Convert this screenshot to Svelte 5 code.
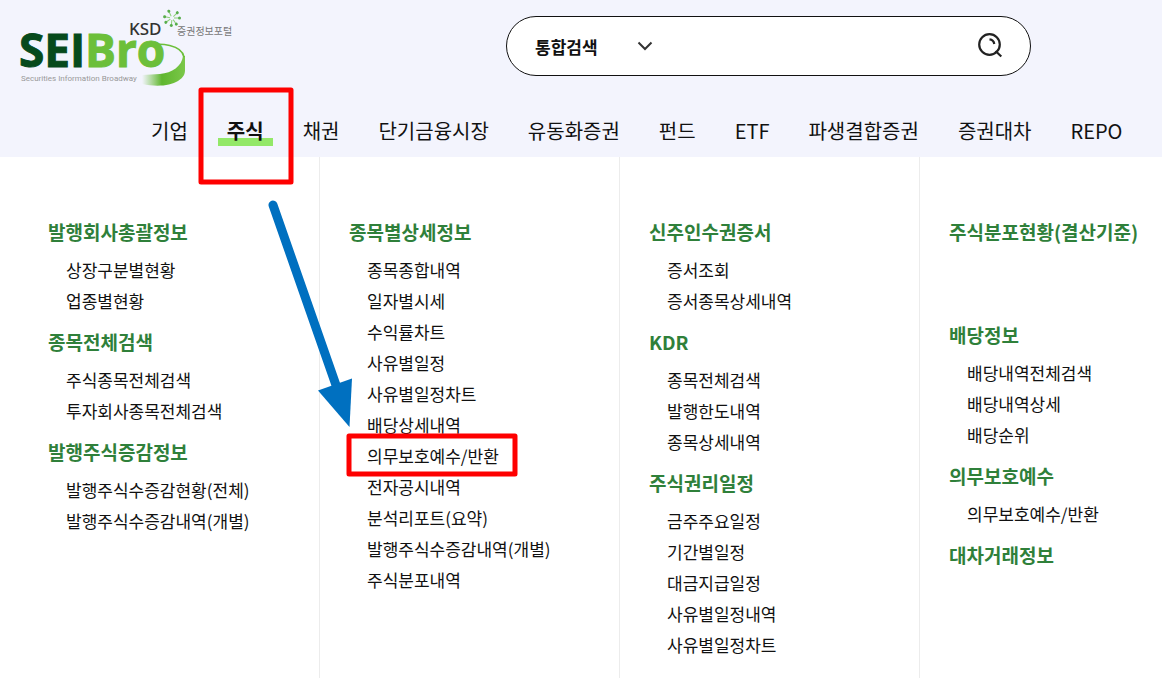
<script lang="ts">
  type Group = { title: string; items: string[]; tall?: boolean }

  const menus = ['기업', '주식', '채권', '단기금융시장', '유동화증권', '펀드', 'ETF', '파생결합증권', '증권대차', 'REPO']

  const columns: Group[][] = [
    [
      { title: '발행회사총괄정보', items: ['상장구분별현황', '업종별현황'] },
      { title: '종목전체검색', items: ['주식종목전체검색', '투자회사종목전체검색'] },
      { title: '발행주식증감정보', items: ['발행주식수증감현황(전체)', '발행주식수증감내역(개별)'] },
    ],
    [
      {
        title: '종목별상세정보',
        items: [
          '종목종합내역',
          '일자별시세',
          '수익률차트',
          '사유별일정',
          '사유별일정차트',
          '배당상세내역',
          '의무보호예수/반환',
          '전자공시내역',
          '분석리포트(요약)',
          '발행주식수증감내역(개별)',
          '주식분포내역',
        ],
      },
    ],
    [
      { title: '신주인수권증서', items: ['증서조회', '증서종목상세내역'] },
      { title: 'KDR', items: ['종목전체검색', '발행한도내역', '종목상세내역'] },
      { title: '주식권리일정', items: ['금주주요일정', '기간별일정', '대금지급일정', '사유별일정내역', '사유별일정차트'] },
    ],
    [
      { title: '주식분포현황(결산기준)', items: [], tall: true },
      { title: '배당정보', items: ['배당내역전체검색', '배당내역상세', '배당순위'] },
      { title: '의무보호예수', items: ['의무보호예수/반환'] },
      { title: '대차거래정보', items: [] },
    ],
  ]

  const rays = [-115, -45, 0, 55, 95, 145, 190]

  let active = $state('주식')
  let keyword = $state('')
</script>

<div class="page">
  <header>
    <div class="top">
      <a class="logo" href="#home" aria-label="SEIBro 증권정보포털">
        <svg width="250" height="92" viewBox="0 0 250 92">
          <defs>
            <linearGradient id="ring" gradientUnits="userSpaceOnUse" x1="142" y1="0" x2="186" y2="0">
              <stop offset="0" stop-color="#6cbf3a" stop-opacity="0" />
              <stop offset="0.45" stop-color="#5fb62f" />
              <stop offset="1" stop-color="#7cc84a" />
            </linearGradient>
          </defs>
          <path
            d="M183 56 C182 66 172 73 160 74 L142 75 L142 84 C156 87 170 86 178 81 C184 77 185 74 185 70 L185 56Z"
            fill="url(#ring)"
          />
          <path d="M148 46 C160 42 182 45 184 57" fill="none" stroke="#6cbf3a" stroke-width="1.6" />
          <text class="mark dark" x="19" y="67">SEI</text>
          <text class="mark light" x="85" y="67">Bro</text>
          <text class="ksd" x="129" y="35">KSD</text>
          <text class="portal" x="177" y="35">증권정보포털</text>
          <text class="tagline" x="21" y="81">Securities Information Broadway</text>
          <g transform="translate(172 18)" stroke="#8ccf77" fill="#58ad4b">
            {#each rays as angle}
              <g transform="rotate({angle})">
                <line x1="2" y1="0" x2="7" y2="0" />
                <circle cx="7.5" cy="0" r="1.5" stroke="none" />
              </g>
            {/each}
          </g>
        </svg>
      </a>

      <form class="search" onsubmit={(e) => e.preventDefault()}>
        <div class="scope">
          <select aria-label="검색 구분">
            <option>통합검색</option>
          </select>
          <svg width="16" height="10" viewBox="0 0 16 10" aria-hidden="true">
            <path d="M1.5 1.5 L8 8 L14.5 1.5" fill="none" stroke="#333" stroke-width="2" />
          </svg>
        </div>
        <input type="text" aria-label="검색어" bind:value={keyword} />
        <button type="submit" aria-label="검색">
          <svg width="26" height="26" viewBox="0 0 26 26" fill="none" stroke="#222" stroke-width="2.2">
            <circle cx="12.5" cy="11.5" r="10.3" />
            <path d="M12.5 6.4 A5.5 5.5 0 0 1 17.3 11 M18.5 18 L24.3 23.5" />
          </svg>
        </button>
      </form>
    </div>

    <nav>
      {#each menus as menu}
        <a href="#{menu}" class:active={active === menu} onclick={() => (active = menu)}>{menu}</a>
      {/each}
    </nav>
  </header>

  <main>
    {#each columns as groups}
      <div class="column">
        {#each groups as group}
          <section class:tall={group.tall}>
            <h2>{group.title}</h2>
            {#if group.items.length > 0}
              <ul>
                {#each group.items as item}
                  <li><a href="#{item}">{item}</a></li>
                {/each}
              </ul>
            {/if}
          </section>
        {/each}
      </div>
    {/each}
  </main>

  <!-- guide marks over the menu -->
  <svg class="guide" width="1162" height="678" viewBox="0 0 1162 678" aria-hidden="true">
    <g fill="none" stroke="#fe0000" stroke-width="5" stroke-linejoin="round">
      <rect x="201" y="90" width="90" height="92" />
      <rect x="349" y="436" width="166" height="38" />
    </g>
    <line x1="273" y1="205" x2="337" y2="388" stroke="#0070c0" stroke-width="9" stroke-linecap="round" />
    <polygon points="318,390.5 352,378.5 349.5,427" fill="#0070c0" />
  </svg>
</div>

<style>
  :global(body) {
    margin: 0;
    overflow: hidden;
  }

  .page {
    position: relative;
    display: flex;
    flex-direction: column;
    min-height: 100vh;
    background: #fff;
    color: #111;
    font-family: 'Noto Sans CJK KR', sans-serif;
  }

  a {
    color: inherit;
    text-decoration: none;
  }

  header {
    background: #f3f4fd;
  }

  .top {
    display: flex;
    justify-content: space-between;
    padding-right: 131px;
  }

  .logo svg { display: block; }

  .mark {
    font: bold 46px 'Open Sans', sans-serif;
    stroke-width: 1;
  }

  .dark { fill: #064a1c; stroke: #064a1c; }
  .light { fill: #6cbf3a; stroke: #6cbf3a; }

  .ksd {
    font: 500 17px 'Noto Sans', sans-serif;
    fill: #333;
  }

  .portal {
    font-size: 10px;
    fill: #777;
  }

  .tagline {
    font: 8px Roboto, sans-serif;
    fill: #999;
  }

  .search {
    box-sizing: border-box;
    display: flex;
    align-items: center;
    width: 525px;
    height: 60px;
    margin-top: 16px;
    padding: 0 27px 0 28px;
    border: 1px solid #111;
    border-radius: 30px;
    background: #fff;
  }

  .scope {
    display: flex;
    align-items: center;
  }

  select {
    width: 102px;
    padding: 0;
    border: 0;
    appearance: none;
    background: none;
    color: #111;
    font: bold 17px 'Noto Sans CJK KR', sans-serif;
  }

  .search input {
    flex: 1;
    min-width: 0;
    margin: 0 16px;
    border: 0;
    outline: 0;
    font: 17px 'Noto Sans CJK KR', sans-serif;
  }

  .search button {
    display: flex;
    padding: 0;
    border: 0;
    background: none;
    cursor: pointer;
  }

  nav {
    display: flex;
    gap: 21px;
    padding: 22px 0 10px 142px;
  }

  nav a {
    padding: 0 9px;
    font-size: 20px;
    line-height: 33px;
    white-space: nowrap;
  }

  nav a.active {
    font-weight: bold;
    background: linear-gradient(#93e868, #93e868) 0 24px / 100% 8px no-repeat;
  }

  main {
    flex: 1;
    display: grid;
    grid-template-columns: 320fr 300fr 300fr 242fr;
  }

  .column {
    min-width: 0;
    padding: 61px 0 16px 29px;
    border-right: 1px solid #ececec;
    white-space: nowrap;
  }

  .column:first-child { padding-left: 48px; }
  .column:last-child { border-right: 0; }

  section { margin-bottom: 12px; }
  .tall { min-height: 91px; }

  h2 {
    margin: 0;
    color: #2f803a;
    font-size: 19px;
    line-height: 28px;
  }

  ul {
    margin: 8px 0 0;
    padding: 0 0 0 18px;
    list-style: none;
  }

  li {
    font-size: 17px;
    line-height: 31px;
  }

  li a:hover { text-decoration: underline; }

  .guide {
    position: absolute;
    top: 0;
    left: 0;
    pointer-events: none;
  }
</style>
